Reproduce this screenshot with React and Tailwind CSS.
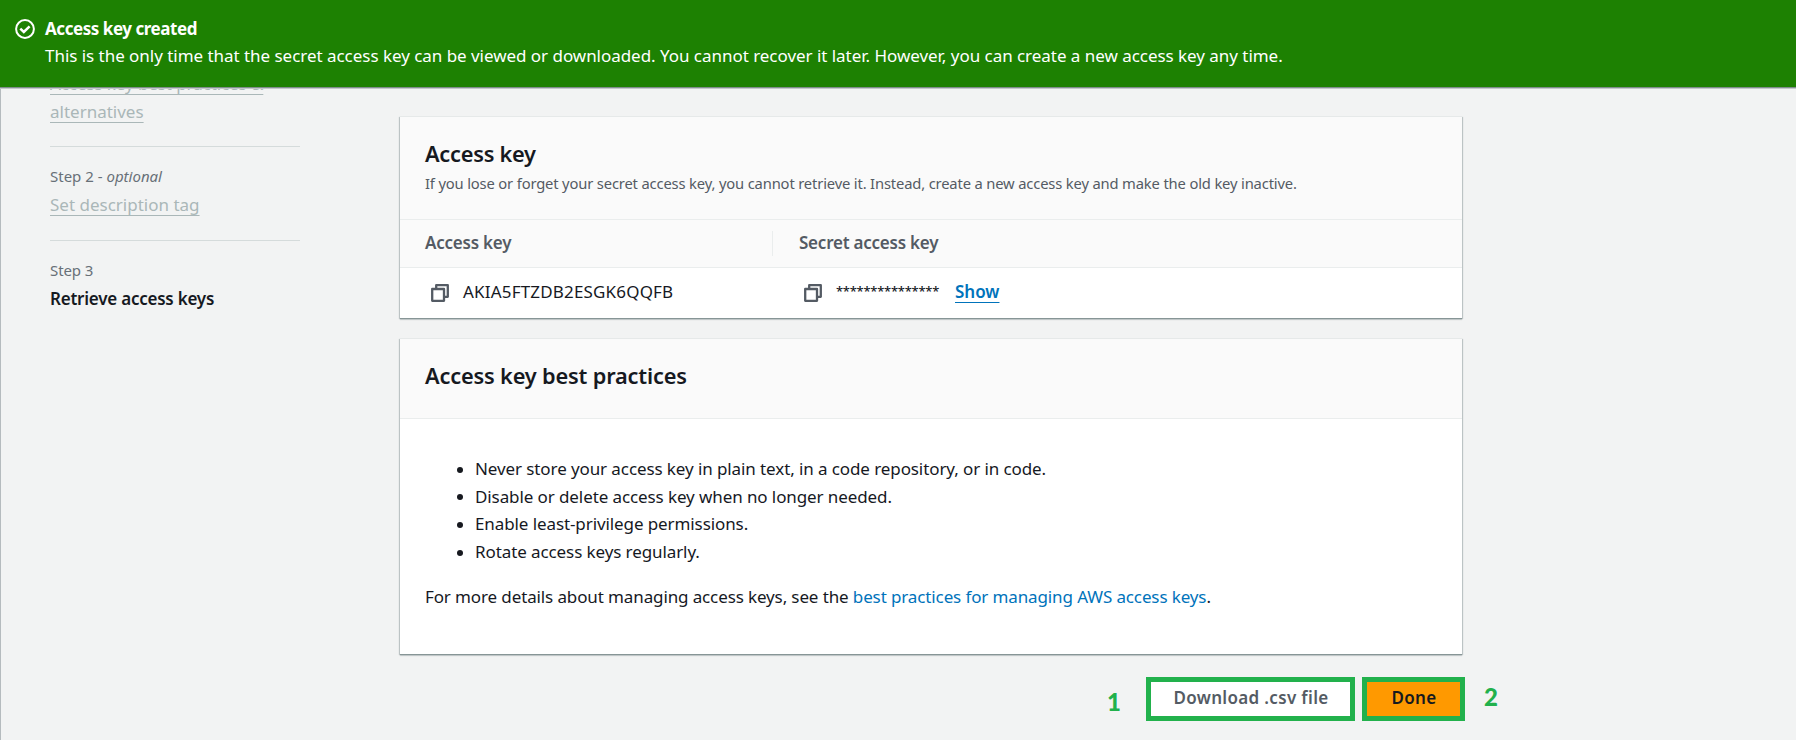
function CheckCircle() {
  return (
    <svg className="mt-[4px] h-5 w-5 shrink-0" viewBox="0 0 20 20" fill="none" stroke="#fff" strokeWidth="2">
      <circle cx="10" cy="10" r="8.9" />
      <path d="M5.3 9.7 8.8 13l5.8-5.6" strokeWidth="2.5" />
    </svg>
  );
}

function CopyIcon() {
  return (
    <svg className="h-[18px] w-[18px] shrink-0" viewBox="0 0 18 18" fill="none" stroke="#545b64" strokeWidth="2.3" strokeLinejoin="round">
      <path d="M5.2 5V1.2h11.6v11.6H13" />
      <path d="M1.2 5h11.8v11.8H1.2z" />
    </svg>
  );
}

const card =
  "border-t border-[#e6e9e9] bg-white shadow-[0_1px_0_0_#879596,0_2px_1px_0_rgba(0,28,36,0.15),1px_1px_1px_0_rgba(0,28,36,0.2),-1px_1px_1px_0_rgba(0,28,36,0.2)]";

const past =
  "text-[17px] leading-[28px] text-[#aab7b8] underline decoration-[#aab7b8] decoration-1 underline-offset-[4px] [text-decoration-skip-ink:none]";

const practices = [
  "Never store your access key in plain text, in a code repository, or in code.",
  "Disable or delete access key when no longer needed.",
  "Enable least-privilege permissions.",
  "Rotate access keys regularly.",
];

function Banner() {
  return (
    <header className="relative z-10 flex h-[87px] gap-[10px] bg-[#1d8102] pt-[15px] pl-[15px] text-[17px] leading-[27px] text-white shadow-[0_1px_0_0_#7f8e8c,0_2px_0_0_#c3c9ca]">
      <CheckCircle />
      <div>
        <div className="font-bold tracking-[-0.45px]">Access key created</div>
        <div className="tracking-[-0.035px]">
          This is the only time that the secret access key can be viewed or downloaded. You cannot recover it later. However, you can create a new access key any time.
        </div>
      </div>
    </header>
  );
}

function Steps() {
  return (
    <nav className="-mt-[17px] w-[250px] shrink-0">
      <div className={past}>
        <span className="tracking-[-0.09px]">Access key best practices &amp;</span>
        <br />
        <span>alternatives</span>
      </div>
      <div className="mt-5 border-t border-[#d5dbdb] pt-[17px]">
        <div className="text-[15px] leading-6 text-[#687078]">
          Step 2 - <em>optional</em>
        </div>
        <div className={past + " mt-[3px]"}>Set description tag</div>
      </div>
      <div className="mt-[21px] border-t border-[#d5dbdb] pt-[17px]">
        <div className="text-[15px] leading-6 tracking-[-0.1px] text-[#687078]">Step 3</div>
        <div className="mt-[3px] text-[17px] leading-[28px] font-semibold tracking-[-0.23px] text-[#16191f]">Retrieve access keys</div>
      </div>
    </nav>
  );
}

function KeyCard() {
  return (
    <section className={card}>
      <div className="h-[102px] bg-[#fafafa] pt-[21px] pl-[25px]">
        <h2 className="text-[21.75px] leading-8 font-semibold tracking-[-0.25px]">Access key</h2>
        <p className="mt-px text-[14.75px] leading-6 tracking-[-0.158px] text-[#545b64]">
          If you lose or forget your secret access key, you cannot retrieve it. Instead, create a new access key and make the old key inactive.
        </p>
      </div>
      <div className="flex h-[49px] items-center border-y border-[#eaeded] bg-[#fafafa] text-[17px] font-semibold tracking-[-0.23px] text-[#545b64]">
        <div className="flex h-[25px] w-[373px] items-center border-r border-[#eaeded] pb-px pl-[25px]">Access key</div>
        <div className="pb-px pl-[26px]">Secret access key</div>
      </div>
      <div className="flex h-[50px] items-center text-[17px]">
        <div className="flex w-[373px] items-center gap-[14px] pl-[31px]">
          <CopyIcon />
          <span className="pb-[3px] tracking-[0.18px]">AKIA5FTZDB2ESGK6QQFB</span>
        </div>
        <div className="flex items-center pl-[31px]">
          <CopyIcon />
          <span className="ml-[14px] w-[118px] pb-[5px] text-[13px] leading-5 font-medium tracking-[-0.25px]">***************</span>
          <a className="-mt-[3px] ml-px font-semibold text-[#0073bb] underline decoration-1 underline-offset-[4px] [text-decoration-skip-ink:none]">Show</a>
        </div>
      </div>
    </section>
  );
}

function PracticesCard() {
  return (
    <section className={card + " mt-5 h-[316px]"}>
      <div className="h-20 border-b border-[#eaeded] bg-[#fafafa] pt-[21px] pl-[25px]">
        <h2 className="text-[21.75px] leading-8 font-semibold tracking-[-0.17px]">Access key best practices</h2>
      </div>
      <div className="pt-9 pl-[25px] text-[17px] leading-[27.6px]">
        <ul className="tracking-[-0.095px]">
          {practices.map((item) => (
            <li key={item} className="flex items-center pl-8">
              <span className="mt-0.5 mr-[12px] h-[6px] w-[6px] rounded-full bg-[#16191f]" />
              {item}
            </li>
          ))}
        </ul>
        <p className="mt-[18px] tracking-[-0.12px]">
          For more details about managing access keys, see the <a className="text-[#0073bb]">best practices for managing AWS access keys</a>.
        </p>
      </div>
    </section>
  );
}

function Actions() {
  return (
    <div className="mt-[23px] flex h-11 pl-[707px] text-[17px] leading-[30px] font-semibold tracking-[0.34px]">
      <span className="w-[39px] shrink-0 pt-[10px] font-[Lato,sans-serif] text-[24px] font-black text-[#22b14c]">1</span>
      <button className="w-[209px] shrink-0 border-[5px] border-[#22b14c] bg-white pb-[3px] pl-px text-[#545b64]">Download .csv file</button>
      <button className="ml-[7px] w-[103px] shrink-0 border-[5px] border-[#22b14c] bg-[#ff9900] pb-[3px] pl-px text-[#16191f]">Done</button>
      <span className="shrink-0 pt-[5px] pl-[19px] font-[Lato,sans-serif] text-[24px] font-black text-[#22b14c]">2</span>
    </div>
  );
}

export default function App() {
  return (
    <div className="flex h-[740px] w-[1796px] flex-col overflow-hidden bg-[#f2f3f3] font-['Noto_Sans',sans-serif] text-[#16191f]">
      <Banner />
      <div className="flex min-h-0 flex-1 overflow-hidden border-l border-[#b5bbbe] pl-[49px]">
        <Steps />
        <main className="ml-[100px] w-[1062px] shrink-0 pt-[29px]">
          <KeyCard />
          <PracticesCard />
          <Actions />
        </main>
      </div>
    </div>
  );
}
